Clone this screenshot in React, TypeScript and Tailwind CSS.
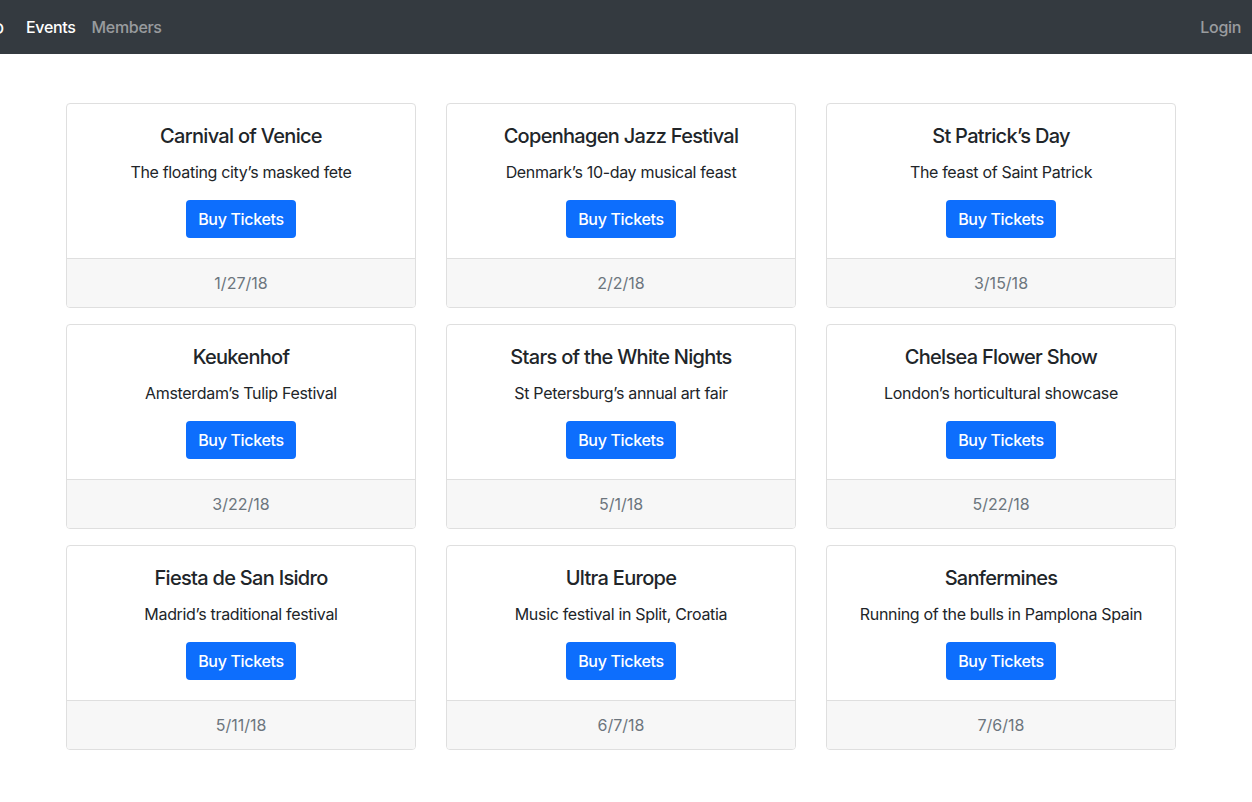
import React from 'react';

const EVENTS = [
  { title: 'Carnival of Venice', blurb: 'The floating city\u2019s masked fete', date: '1/27/18' },
  { title: 'Copenhagen Jazz Festival', blurb: 'Denmark\u2019s 10-day musical feast', date: '2/2/18' },
  { title: 'St Patrick\u2019s Day', blurb: 'The feast of Saint Patrick', date: '3/15/18' },
  { title: 'Keukenhof', blurb: 'Amsterdam\u2019s Tulip Festival', date: '3/22/18' },
  { title: 'Stars of the White Nights', blurb: 'St Petersburg\u2019s annual art fair', date: '5/1/18' },
  { title: 'Chelsea Flower Show', blurb: 'London\u2019s horticultural showcase', date: '5/22/18' },
  { title: 'Fiesta de San Isidro', blurb: 'Madrid\u2019s traditional festival', date: '5/11/18' },
  { title: 'Ultra Europe', blurb: 'Music festival in Split, Croatia', date: '6/7/18' },
  { title: 'Sanfermines', blurb: 'Running of the bulls in Pamplona Spain', date: '7/6/18' },
];

const EventCard: React.FC<{ title: string; blurb: string; date: string }> = ({ title, blurb, date }) => (
  <div className="flex flex-col border border-[#dfdfdf] rounded-[4px] bg-white text-center overflow-hidden">
    <div className="p-5">
      <h5 className="text-[20px] leading-[24px] font-medium tracking-[-0.035em] text-[#212529] mb-3">{title}</h5>
      <p className="text-[16px] leading-[24px] tracking-[-0.02em] text-[#212529] mb-4">{blurb}</p>
      <button className="bg-[#0d6efd] text-white text-[16px] leading-[24px] font-medium tracking-[-0.02em] px-3 py-[7px] rounded-[4px]">
        Buy Tickets
      </button>
    </div>
    <div className="bg-[#f7f7f7] border-t border-[#dfdfdf] px-5 py-3 text-[16px] leading-[24px] text-[#6c757d]">
      {date}
    </div>
  </div>
);

export default function App() {
  return (
    <div className="min-h-screen bg-white font-['Inter','Liberation_Sans',sans-serif]">
      <nav className="h-[54px] bg-[#343a40] flex items-center tracking-[-0.02em]">
        <span className="w-[4px] overflow-hidden flex justify-end text-white text-[20px] leading-[24px]">
          <span className="whitespace-nowrap">Demo</span>
        </span>
        <a className="ml-[14px] px-2 text-[16px] font-medium text-white">Events</a>
        <a className="px-2 text-[16px] font-medium text-white/50">Members</a>
        <a className="ml-auto px-2 mr-[3px] text-[16px] font-medium text-white/50">Login</a>
      </nav>

      <main className="w-[1110px] ml-[66px] mt-[49px] grid grid-cols-3 gap-x-[30px] gap-y-4">
        {EVENTS.map((e) => (
          <EventCard key={e.title} {...e} />
        ))}
      </main>
    </div>
  );
}
